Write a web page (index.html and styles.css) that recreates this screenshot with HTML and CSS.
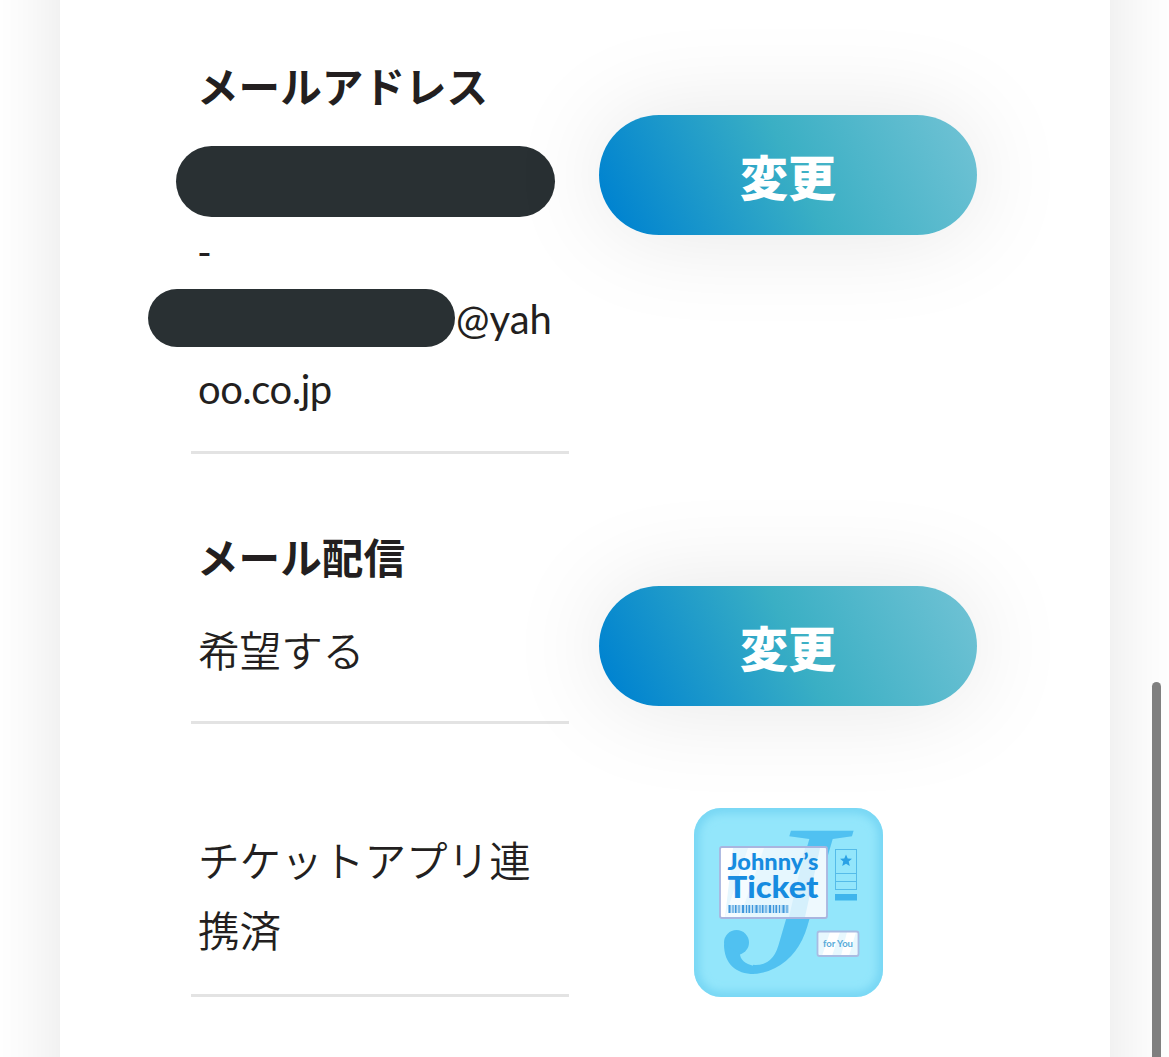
FILE: index.html
```html
<!DOCTYPE html>
<html lang="ja">
<head>
    <meta charset="UTF-8">
    <meta name="viewport" content="width=device-width, initial-scale=1.0">
    <title>会員情報</title>
    <link rel="stylesheet" href="styles.css">
</head>
<body>
    <div class="page">
        <main class="panel">
            <!-- メールアドレス -->
            <section class="row row-address">
                <div class="info">
                    <h2 class="label">メールアドレス</h2>
                    <div class="value">
                        <div class="line"><span class="mask mask-long"></span></div>
                        <div class="line hyphen">-</div>
                        <div class="line"><span class="mask mask-short"></span><span class="domain">@yah</span></div>
                        <div class="line domain-end">oo.co.jp</div>
                    </div>
                </div>
                <a href="#" class="btn">変更</a>
            </section>

            <!-- メール配信 -->
            <section class="row row-delivery">
                <div class="info">
                    <h2 class="label">メール配信</h2>
                    <div class="value">希望する</div>
                </div>
                <a href="#" class="btn">変更</a>
            </section>

            <!-- チケットアプリ -->
            <section class="row row-ticket">
                <div class="info">
                    <div class="value">チケットアプリ連携済</div>
                </div>
                <a href="#" class="app-link">
                    <svg class="app-icon" viewBox="0 0 189 189" width="189" height="189">
                        <defs>
                            <clipPath id="round"><rect width="189" height="189" rx="27"/></clipPath>
                            <clipPath id="window"><rect x="27" y="40" width="105" height="69"/></clipPath>
                            <clipPath id="stem"><path d="M0 0h189v189H59V110H0z"/></clipPath>
                            <filter id="soft" x="-20%" y="-20%" width="140%" height="140%"><feGaussianBlur stdDeviation="5"/></filter>
                            <filter id="edge" x="-20%" y="-20%" width="140%" height="140%"><feGaussianBlur stdDeviation="0.7"/></filter>
                        </defs>
                        <g clip-path="url(#round)">
                            <rect width="189" height="189" fill="#93e6fb"/>
                            <rect width="189" height="189" rx="27" fill="none" stroke="#6fd2f2" stroke-width="9" filter="url(#soft)"/>
                        </g>
                        <g clip-path="url(#stem)">
                            <text class="big-j" transform="matrix(1.15 0 -0.29 1 27 164)">J</text>
                        </g>
                        <!-- 飾りの丸とカーブ -->
                        <circle cx="42.5" cy="134.5" r="12.5" fill="#50c1f1"/>
                        <path d="M30 136C30 156 42 166 60 166V158C51 156 46 151 46 146z" fill="#50c1f1"/>
                        <rect x="26" y="39" width="107" height="71" rx="2" fill="#e6f7fe"/>
                        <g clip-path="url(#window)">
                            <path d="M27 40h12l-8 69h-4z" fill="#fff"/>
                            <path d="M54 40h16L46 109H31z" fill="#fff" opacity=".6"/>
                            <path d="M111 40h22v69H95z" fill="#d5f0fc"/>
                            <path d="M126 40h7v69h-22z" fill="#fff" opacity=".6"/>
                        </g>
                        <rect x="26" y="39" width="107" height="71" rx="2" fill="none" stroke="#a9b5df" stroke-width="1.8" filter="url(#edge)"/>
                        <text class="name" x="33.5" y="61.5" font-size="22" textLength="91" lengthAdjust="spacingAndGlyphs">Johnny’s</text>
                        <text class="name" x="33.5" y="89.5" font-size="30" textLength="91" lengthAdjust="spacingAndGlyphs">Ticket</text>
                        <g fill="none" stroke="#3f97dc" stroke-width="8">
                            <path d="M34.5 101H95" stroke-dasharray="2 2 1 1.5 1.5 2 1 2.5"/>
                            <path d="M34.5 101H95" opacity=".25"/>
                        </g>
                        <g fill="none" stroke="#55bce9">
                            <rect x="141.5" y="41.5" width="21" height="40"/>
                            <path d="M141.5 65.5h21M141.5 73.5h21"/>
                        </g>
                        <path d="M152 46.5l1.7 4 4.3.3-3.3 2.8 1.1 4.4-3.8-2.3-3.8 2.3 1.1-4.4-3.3-2.8 4.3-.3z" fill="#2ba2e5"/>
                        <rect x="141" y="86" width="22" height="6.5" fill="#3fb5ec"/>
                        <rect x="123.5" y="123.5" width="41" height="24.5" rx="2" fill="#e8f8fe"/>
                        <path d="M136 124h10l-8 24h-10zM153 124h9l-7 24h-8z" fill="#fff"/>
                        <rect x="123.5" y="123.5" width="41" height="24.5" rx="2" fill="none" stroke="#a9bce2" stroke-width="1.8" filter="url(#edge)"/>
                        <text class="for-you" x="129" y="139" textLength="30" lengthAdjust="spacingAndGlyphs">for You</text>
                    </svg>
                </a>
            </section>
        </main>
        <div class="scroll-thumb"></div>
    </div>
</body>
</html>
```

FILE: styles.css
```css
* {
    box-sizing: border-box;
}
body {
    margin: 0;
    background-color: #fff;
    color: #231f20;
    font-family: Lato, "Noto Sans CJK JP", sans-serif;
}
.page {
    position: relative;
    height: 1057px;
    overflow: hidden;
}
.panel {
    width: 1050px;
    height: 1457px;
    margin-top: -200px;
    margin-left: 60px;
    padding: 252px 133px 0 131px;
    background-color: #fff;
    box-shadow: 0 0 75px rgba(0, 0, 0, 0.11);
}
.row {
    display: flex;
    align-items: flex-start;
    gap: 30px;
}
.info {
    width: 378px;
    padding-left: 7px;
    border-bottom: 3px solid #e3e3e3;
}
.label {
    margin: -2px 0 0 -1px;
    font-family: "Noto Sans CJK JP", sans-serif;
    font-size: 41.6px;
    font-weight: 700;
    line-height: 70px;
}
.value {
    font-family: "Noto Sans CJK JP", sans-serif;
    font-size: 41.6px;
    font-weight: 350;
    line-height: 70px;
}
.line {
    display: flex;
    align-items: center;
    height: 70px;
    font-family: Lato, sans-serif;
    font-size: 40px;
    font-weight: 400;
}
.hyphen {
    margin-left: -1px;
}
.mask {
    flex: none;
    border-radius: 36px;
    background-color: #293033;
}
.mask-long {
    width: 379px;
    height: 71px;
    margin-left: -22px;
}
.mask-short {
    width: 307px;
    height: 58px;
    margin-left: -50px;
    margin-top: -8px;
}
.domain {
    margin-left: 1px;
    padding-bottom: 5px;
}
.domain-end {
    padding-bottom: 5px;
    letter-spacing: -0.5px;
}
.btn {
    width: 378px;
    height: 120px;
    border-radius: 60px;
    background: linear-gradient(63deg, #0083d0 5%, #3aafc4 52%, #72c3d5 100%);
    box-shadow: 0 0 100px rgba(0, 0, 0, 0.1);
    color: #fff;
    font-family: "Noto Sans CJK JP", sans-serif;
    font-size: 48px;
    font-weight: 900;
    line-height: 121px;
    text-align: center;
    text-decoration: none;
}
.row-address .info {
    height: 402px;
}
.row-address .value {
    margin-top: 26.5px;
}
.row-address .btn,
.row-delivery .btn {
    margin-top: 63px;
}
.row-delivery {
    margin-top: 69px;
}
.row-delivery .info {
    height: 201px;
}
.row-delivery .value {
    margin-top: 23px;
}
.row-ticket {
    margin-top: 84px;
}
.row-ticket .info {
    height: 189px;
    padding-top: 16px;
}
.app-link {
    width: 378px;
    text-align: center;
}
.app-icon {
    display: block;
    margin: 0 auto;
    overflow: visible;
}
.big-j {
    fill: #50c1f1;
    font-family: "Liberation Serif", serif;
    font-size: 216px;
}
.name {
    fill: #168ce0;
    font-family: Lato, sans-serif;
    font-weight: 900;
}
.for-you {
    fill: #58abd9;
    font-family: Lato, sans-serif;
    font-size: 9px;
    font-weight: 700;
}
.scroll-thumb {
    position: absolute;
    top: 682px;
    left: 1152px;
    width: 9px;
    height: 375px;
    border-radius: 5px 5px 0 0;
    background-color: #7f7f7f;
}
```
